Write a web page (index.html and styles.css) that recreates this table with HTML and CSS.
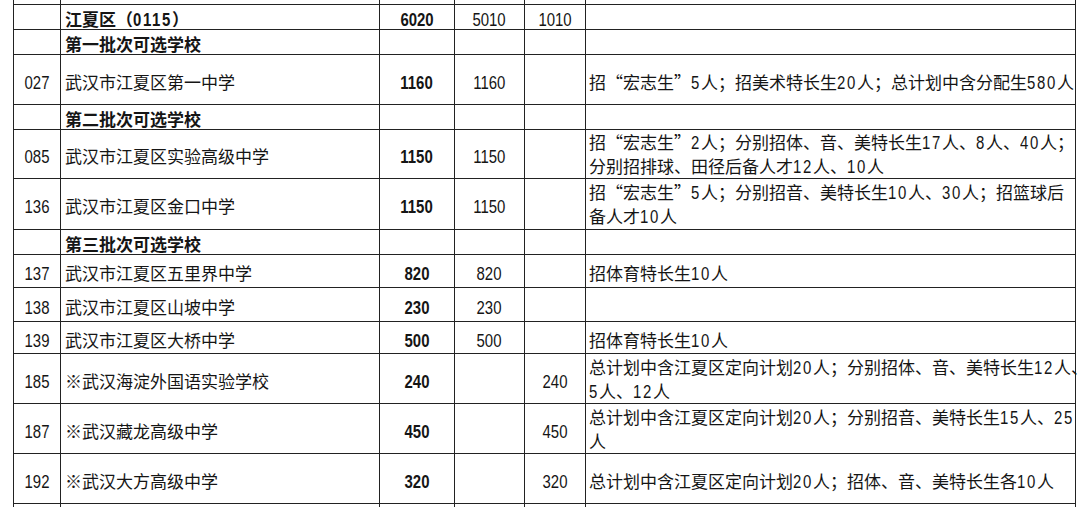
FILE: index.html
```html
<!DOCTYPE html>
<html lang="zh-CN">
<head>
<meta charset="utf-8">
<title>江夏区招生计划</title>
<link rel="stylesheet" href="styles.css">
</head>
<body>
<div class="sheet">
<table class="plan">
<colgroup>
<col class="c-code"><col class="c-name"><col class="c-total"><col class="c-a"><col class="c-b"><col class="c-note">
</colgroup>
<tbody>
<tr class="r25"><td></td><td></td><td></td><td></td><td></td><td></td></tr>
<tr class="r25"><td class="code"></td><td class="name b">江夏区（<span class="d d4">0115</span>）</td><td class="num b"><span class="n">6020</span></td><td class="num"><span class="n">5010</span></td><td class="num"><span class="n">1010</span></td><td class="note"></td></tr>
<tr class="r25"><td class="code"></td><td class="name b">第一批次可选学校</td><td class="num"></td><td class="num"></td><td class="num"></td><td class="note"></td></tr>
<tr class="r50"><td class="code"><span class="n">027</span></td><td class="name">武汉市江夏区第一中学</td><td class="num b"><span class="n">1160</span></td><td class="num"><span class="n">1160</span></td><td class="num"></td><td class="note">招<span class="q">“</span>宏志生<span class="q">”</span><span class="d d1">5</span>人；招美术特长生<span class="d d2">20</span>人；总计划中含分配生<span class="d d3">580</span>人</td></tr>
<tr class="r25"><td class="code"></td><td class="name b">第二批次可选学校</td><td class="num"></td><td class="num"></td><td class="num"></td><td class="note"></td></tr>
<tr class="r49"><td class="code"><span class="n">085</span></td><td class="name">武汉市江夏区实验高级中学</td><td class="num b"><span class="n">1150</span></td><td class="num"><span class="n">1150</span></td><td class="num"></td><td class="note two">招<span class="q">“</span>宏志生<span class="q">”</span><span class="d d1">2</span>人；分别招体、音、美特长生<span class="d d2">17</span>人、<span class="d d1">8</span>人、<span class="d d2">40</span>人；<br>分别招排球、田径后备人才<span class="d d2">12</span>人、<span class="d d2">10</span>人</td></tr>
<tr class="r51"><td class="code"><span class="n">136</span></td><td class="name">武汉市江夏区金口中学</td><td class="num b"><span class="n">1150</span></td><td class="num"><span class="n">1150</span></td><td class="num"></td><td class="note two">招<span class="q">“</span>宏志生<span class="q">”</span><span class="d d1">5</span>人；分别招音、美特长生<span class="d d2">10</span>人、<span class="d d2">30</span>人；招篮球后<br>备人才<span class="d d2">10</span>人</td></tr>
<tr class="r25"><td class="code"></td><td class="name b">第三批次可选学校</td><td class="num"></td><td class="num"></td><td class="num"></td><td class="note"></td></tr>
<tr class="r33"><td class="code"><span class="n">137</span></td><td class="name">武汉市江夏区五里界中学</td><td class="num b"><span class="n">820</span></td><td class="num"><span class="n">820</span></td><td class="num"></td><td class="note">招体育特长生<span class="d d2">10</span>人</td></tr>
<tr class="r34"><td class="code"><span class="n">138</span></td><td class="name">武汉市江夏区山坡中学</td><td class="num b"><span class="n">230</span></td><td class="num"><span class="n">230</span></td><td class="num"></td><td class="note"></td></tr>
<tr class="r32"><td class="code"><span class="n">139</span></td><td class="name">武汉市江夏区大桥中学</td><td class="num b"><span class="n">500</span></td><td class="num"><span class="n">500</span></td><td class="num"></td><td class="note">招体育特长生<span class="d d2">10</span>人</td></tr>
<tr class="r50"><td class="code"><span class="n">185</span></td><td class="name">※武汉海淀外国语实验学校</td><td class="num b"><span class="n">240</span></td><td class="num"></td><td class="num"><span class="n">240</span></td><td class="note two">总计划中含江夏区定向计划<span class="d d2">20</span>人；分别招体、音、美特长生<span class="d d2">12</span>人、<br><span class="d d1">5</span>人、<span class="d d2">12</span>人</td></tr>
<tr class="r50"><td class="code"><span class="n">187</span></td><td class="name">※武汉藏龙高级中学</td><td class="num b"><span class="n">450</span></td><td class="num"></td><td class="num"><span class="n">450</span></td><td class="note two">总计划中含江夏区定向计划<span class="d d2">20</span>人；分别招音、美特长生<span class="d d2">15</span>人、<span class="d d2">25</span><br>人</td></tr>
<tr class="r50"><td class="code"><span class="n">192</span></td><td class="name">※武汉大方高级中学</td><td class="num b"><span class="n">320</span></td><td class="num"></td><td class="num"><span class="n">320</span></td><td class="note">总计划中含江夏区定向计划<span class="d d2">20</span>人；招体、音、美特长生各<span class="d d2">10</span>人</td></tr>
<tr class="r25"><td></td><td></td><td></td><td></td><td></td><td></td></tr>
</tbody>
</table>
</div>
</body>
</html>
```

FILE: styles.css
```css
html, body {
  margin: 0;
  padding: 0;
  background: #ffffff;
}

.sheet {
  width: 1080px;
  height: 507px;
  overflow: hidden;
  padding-left: 13px;
  box-sizing: border-box;
}

.plan {
  border-collapse: collapse;
  table-layout: fixed;
  width: 1063px;
  margin-top: -21px;
  font-family: "Noto Sans CJK SC", sans-serif;
  font-size: 17px;
  letter-spacing: 0;
  color: #151515;
}

.c-code { width: 47px; }
.c-name { width: 319px; }
.c-total { width: 75px; }
.c-a { width: 70px; }
.c-b { width: 61px; }
.c-note { width: 490px; }

.plan td {
  border: 1px solid #222222;
  padding: 4px 0 0 4px;
  vertical-align: middle;
  white-space: nowrap;
  line-height: 20px;
  overflow: visible;
}

.r25 td { height: 20px; }
.r32 td { height: 27px; }
.r33 td { height: 28px; }
.r34 td { height: 29px; }
.r49 td { height: 44px; }
.r50 td { height: 45px; }
.r51 td { height: 46px; }

.plan td.code,
.plan td.num {
  text-align: center;
  padding-left: 0;
}

.plan td.name {
  padding-left: 4px;
}

.plan td.note {
  padding-left: 3px;
}

.plan td.note.two {
  padding-top: 0;
  line-height: 24px;
}

.b {
  font-weight: 700;
}

/* condensed digits: Arial-width font squeezed horizontally */
.n {
  display: inline-block;
  font-family: "Liberation Sans", sans-serif;
  font-size: 18px;
  line-height: 18px;
  transform: scaleX(0.83);
}

.d {
  display: inline-block;
  font-family: "Liberation Sans", sans-serif;
  font-size: 18px;
  line-height: 18px;
  letter-spacing: 2px;
  transform: scaleX(0.83);
  transform-origin: 0 50%;
}

.d1 { margin-right: -2px; }
.d2 { margin-right: -4px; }
.d3 { margin-right: -6px; }
.d4 { margin-right: -8px; }

.q {
  font-family: "Noto Sans CJK SC", sans-serif;
}
```
